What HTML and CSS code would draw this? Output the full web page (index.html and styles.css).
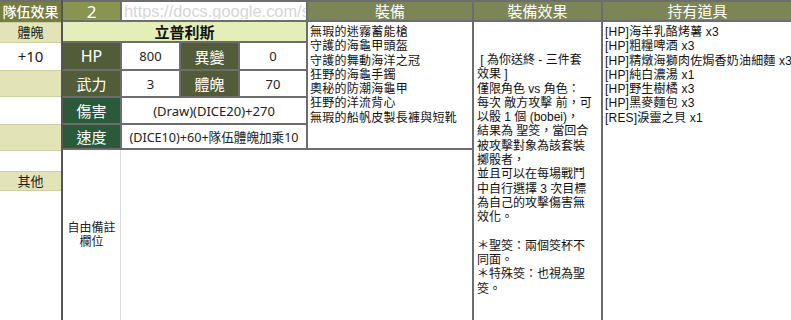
FILE: index.html
```
<!DOCTYPE html>
<html lang="zh-Hant">
<head>
<meta charset="utf-8">
<title>立普利斯</title>
<link rel="stylesheet" href="styles.css">
</head>
<body>
<div class="sheet">
  <div class="left">
    <div class="lc head">隊伍效果</div>
    <div class="lc khaki r21">體魄</div>
    <div class="lc r27 val">+10</div>
    <div class="lc khaki r27"></div>
    <div class="lc r27"></div>
    <div class="lc khaki r27"></div>
    <div class="lc r20"></div>
    <div class="lc khaki r20">其他</div>
  </div>
  <div class="main">
    <div class="hdr">
      <div class="h-num">2</div>
      <div class="h-url"><span class="url-text">https://docs.google.com/spreadsheets</span></div>
      <div class="h-title h-equip">裝備</div>
      <div class="h-title h-eff">裝備效果</div>
      <div class="h-title h-items">持有道具</div>
    </div>
    <div class="body">
      <div class="block">
        <div class="top">
          <div class="stats">
            <div class="name">立普利斯</div>
            <div class="grid">
              <div class="lbl olive big">HP</div>
              <div class="num">800</div>
              <div class="lbl olive">異變</div>
              <div class="num">0</div>
              <div class="lbl olive">武力</div>
              <div class="num">3</div>
              <div class="lbl olive">體魄</div>
              <div class="num">70</div>
              <div class="lbl green">傷害</div>
              <div class="num wide">(Draw)(DICE20)+270</div>
              <div class="lbl green">速度</div>
              <div class="num wide small">(DICE10)+60+隊伍體魄加乘10</div>
            </div>
          </div>
          <div class="equip list">
            <div>無瑕的迷霧蓄能槍</div>
            <div>守護的海龜甲頭盔</div>
            <div>守護的舞動海洋之冠</div>
            <div>狂野的海龜手鐲</div>
            <div>奧秘的防潮海龜甲</div>
            <div>狂野的洋流背心</div>
            <div>無瑕的船帆皮製長褲與短靴</div>
          </div>
        </div>
        <div class="notes">
          <div class="note-label"><span>自由備註</span><span>欄位</span></div>
        </div>
      </div>
      <div class="effects">
        <div>&nbsp;[ 為你送終 - 三件套</div>
        <div>效果 ]</div>
        <div>僅限角色 vs 角色：</div>
        <div>每次 敵方攻擊 前，可</div>
        <div>以骰 1 個 (bobei)，</div>
        <div>結果為 聖筊，當回合</div>
        <div>被攻擊對象為該套裝</div>
        <div>擲骰者，</div>
        <div>並且可以在每場戰鬥</div>
        <div>中自行選擇 3 次目標</div>
        <div>為自己的攻擊傷害無</div>
        <div>效化。</div>
        <div>&nbsp;</div>
        <div>＊聖筊：兩個筊杯不</div>
        <div>同面。</div>
        <div>＊特殊筊：也視為聖</div>
        <div>筊。</div>
      </div>
      <div class="items list">
        <div>[HP]海羊乳酪烤薯 x3</div>
        <div>[HP]粗糧啤酒 x3</div>
        <div>[HP]精燉海獅肉佐焗香奶油細麵 x3</div>
        <div>[HP]純白濃湯 x1</div>
        <div>[HP]野生樹橘 x3</div>
        <div>[HP]黑麥麵包 x3</div>
        <div>[RES]淚靈之貝 x1</div>
      </div>
    </div>
  </div>
</div>
</body>
</html>
```
FILE: styles.css
```
* { box-sizing: border-box; }
html, body { margin: 0; padding: 0; background: #fff; }
body {
  width: 791px;
  height: 320px;
  overflow: hidden;
  font-family: "Noto Sans", "Noto Sans CJK TC", sans-serif;
  color: #1a1a1a;
}
.sheet { display: flex; width: 791px; height: 320px; }

/* left column */
.left { width: 61px; flex: none; display: flex; flex-direction: column; }
.lc {
  display: flex; align-items: center; justify-content: center;
  font-size: 13px; line-height: 1;
}
.lc.head {
  height: 22px; background: #747e40; color: #fff;
  font-size: 14px; font-weight: 500; border-top: 2px solid #6d6d6d;
}
.lc.khaki { background: #e2e3b6; border-top: 1px solid #cfd0a2; border-bottom: 1px solid #cfd0a2; }
.r21 { height: 21px; }
.r27 { height: 27px; }
.r20 { height: 20px; }
.lc.val { font-size: 15px; }

/* main */
.main { flex: 1; border-left: 2px solid #555; display: flex; flex-direction: column; }
.hdr {
  display: flex; height: 22px;
  border-top: 2px solid #6d6d6d; border-bottom: 2px solid #6d6d6d;
}
.hdr > div { display: flex; align-items: center; overflow: hidden; white-space: nowrap; line-height: 1; }
.h-num {
  width: 59px; border-right: 2px solid #6d6d6d; background: #8a9451;
  color: #fff; font-size: 17px; justify-content: center;
}
.h-url {
  width: 186px; border-right: 2px solid #6d6d6d; background: #fff;
  color: #d6d6d6; font-family: "Liberation Sans", sans-serif; font-size: 16.4px;
  padding-left: 2px;
}
.url-text { display: block; width: 182px; overflow: hidden; }
.h-title { background: #7c8556; color: #fff; font-size: 15px; justify-content: center; }
.h-equip { width: 166px; border-right: 2px solid #6d6d6d; }
.h-eff { width: 129px; border-right: 2px solid #6d6d6d; }
.h-items { flex: 1; }

.body { flex: 1; display: flex; }
.block { width: 411px; border-right: 2px solid #6d6d6d; display: flex; flex-direction: column; }
.top { display: flex; height: 128px; border-bottom: 2px solid #6d6d6d; }
.stats { width: 245px; border-right: 2px solid #6d6d6d; display: flex; flex-direction: column; }
.name {
  height: 21px; background: #e4eeb8; border-bottom: 2px solid #6d6d6d;
  display: flex; align-items: center; justify-content: center;
  font-size: 15px; font-weight: 700; color: #111;
}
.grid {
  display: grid;
  grid-template-columns: 57px 57px 57px 1fr;
  grid-template-rows: 26px 25px 25px 23px;
  gap: 2px;
  background: #6d6d6d;
}
.grid > div { display: flex; align-items: center; justify-content: center; white-space: nowrap; }
.lbl { color: #fff; font-size: 15px; }
.lbl.big { font-size: 16px; }
.olive { background: #535c39; }
.green { background: #2a5a39; }
.num { background: #fff; font-size: 13px; color: #222; }
.num.wide { grid-column: span 3; }
.num.small { font-size: 12.6px; }

.list {
  font-family: "Liberation Sans", "Noto Sans CJK TC", sans-serif;
  font-size: 12px; line-height: 14.3px; color: #111; white-space: nowrap;
}
.equip { flex: 1; padding: 3px 0 0 2px; letter-spacing: 0.25px; }
.notes { flex: 1; display: flex; }
.note-label {
  width: 58px; border-right: 1px solid #dcdcdc;
  display: flex; flex-direction: column; align-items: center; justify-content: center;
  font-size: 12px; line-height: 14px; color: #222;
}
.effects {
  width: 129px; border-right: 2px solid #6d6d6d;
  padding: 31px 0 0 3px;
  font-family: "Liberation Sans", "Noto Sans CJK TC", sans-serif;
  font-size: 12px; line-height: 14.3px; color: #111; white-space: nowrap;
}
.items { flex: 1; padding: 3px 0 0 2px; letter-spacing: 0.2px; }
```
